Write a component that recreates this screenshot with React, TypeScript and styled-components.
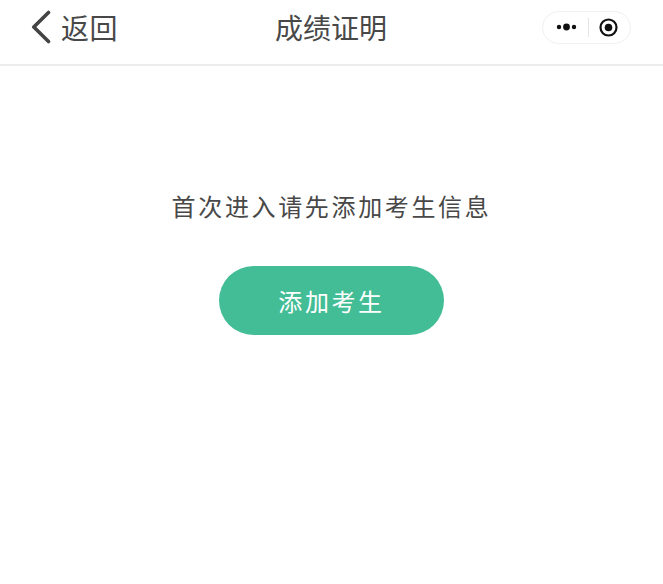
import styled, { createGlobalStyle } from "styled-components"

const FONT = `"Noto Sans CJK SC", "Noto Sans", sans-serif`

const GlobalStyle = createGlobalStyle`
    html, body {
        margin: 0;
        padding: 0;
        background: #ffffff;
    }
    * {
        box-sizing: border-box;
    }
`

const Page = styled.div`
    width: 663px;
    height: 584px;
    overflow: hidden;
    background: #ffffff;
    font-family: ${FONT};
    display: flex;
    flex-direction: column;
    align-items: center;
`

const NavBar = styled.div`
    width: 100%;
    height: 66px;
    flex: none;
    display: grid;
    grid-template-columns: 1fr auto 1fr;
    align-items: center;
    padding: 0 32px 10px 31px;
    border-bottom: 2px solid #ececec;
`

const BackLink = styled.div`
    display: flex;
    align-items: center;
    gap: 10px;
    color: #484848;
    font-size: 28px;
    letter-spacing: 0.6px;
    line-height: 40px;
`

const Title = styled.div`
    color: #484848;
    font-size: 28px;
    line-height: 40px;
`

const Capsule = styled.div`
    justify-self: end;
    width: 89px;
    height: 33px;
    border: 1px solid #f0f0f0;
    border-radius: 17px;
    display: flex;
    align-items: center;
    justify-content: space-between;
    padding: 0 12px 0 13px;
`

const CapsuleDivider = styled.span`
    width: 1px;
    height: 19px;
    background: #e4e4e4;
`

const Message = styled.div`
    margin-top: 122px;
    color: #484848;
    font-size: 24px;
    line-height: 36px;
    letter-spacing: 2.65px;
`

const AddButton = styled.button`
    margin-top: 42px;
    width: 225px;
    height: 69px;
    border: none;
    border-radius: 35px;
    background: #43bd95;
    color: #ffffff;
    font-family: ${FONT};
    font-size: 24px;
    letter-spacing: 2.6px;
    padding: 0;
`

const App = () => {
    return (
        <>
            <GlobalStyle />
            <Page>
                <NavBar>
                    <BackLink>
                        <svg width="20" height="34" viewBox="0 0 20 34" fill="none">
                            <path d="M17.5 2.5 L2.8 17 L17.5 31.5" stroke="#444444" strokeWidth="3.6" strokeLinecap="round" strokeLinejoin="round" />
                        </svg>
                        <span>返回</span>
                    </BackLink>
                    <Title>成绩证明</Title>
                    <Capsule>
                        <svg width="21" height="8" viewBox="0 0 21 8" fill="#111111">
                            <circle cx="3" cy="4" r="2.2" />
                            <circle cx="10.5" cy="4" r="3.4" />
                            <circle cx="18" cy="4" r="2.2" />
                        </svg>
                        <CapsuleDivider />
                        <svg width="19" height="19" viewBox="0 0 19 19" fill="none">
                            <circle cx="9.5" cy="9.5" r="8" stroke="#111111" strokeWidth="2.2" />
                            <circle cx="9.5" cy="9.5" r="3.8" fill="#111111" />
                        </svg>
                    </Capsule>
                </NavBar>
                <Message>首次进入请先添加考生信息</Message>
                <AddButton>添加考生</AddButton>
            </Page>
        </>
    )
}

export default App
